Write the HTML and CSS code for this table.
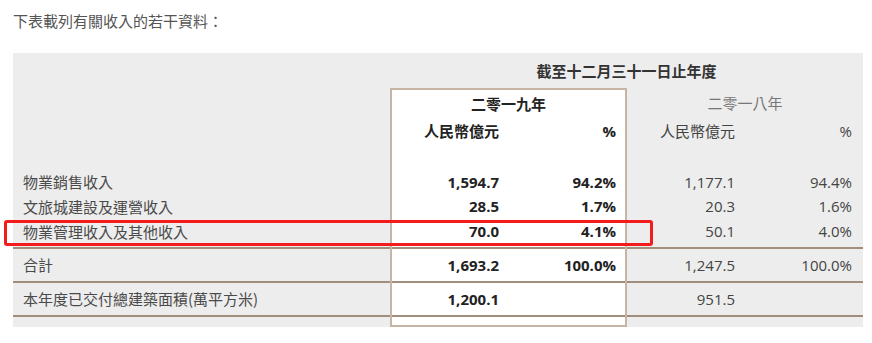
FILE: index.html
```html
<!DOCTYPE html>
<html lang="zh-Hant">
<head>
<meta charset="utf-8">
<title>收入資料</title>
<link rel="stylesheet" href="styles.css">
</head>
<body>
<div class="page">
  <p class="intro">下表載列有關收入的若干資料：</p>
  <div class="panel">
    <div class="head-empty"></div>
    <div class="period">截至十二月三十一日止年度</div>

    <div class="col labels">
      <div class="row r-year"></div>
      <div class="row r-unit"></div>
      <div class="row r-gap"></div>
      <div class="row r-d1"><span class="lbl">物業銷售收入</span></div>
      <div class="row r-d2"><span class="lbl">文旅城建設及運營收入</span></div>
      <div class="row r-d3 line"><span class="lbl">物業管理收入及其他收入</span></div>
      <div class="row r-tot line"><span class="lbl">合計</span></div>
      <div class="row r-gfa line"><span class="lbl">本年度已交付總建築面積(萬平方米)</span></div>
      <div class="row r-tail"></div>
    </div>

    <div class="col g19">
      <div class="row r-year year">二零一九年</div>
      <div class="row r-unit pair"><span>人民幣億元</span><span>%</span></div>
      <div class="row r-gap"></div>
      <div class="row r-d1 pair"><span>1,594.7</span><span>94.2%</span></div>
      <div class="row r-d2 pair"><span>28.5</span><span>1.7%</span></div>
      <div class="row r-d3 pair line"><span>70.0</span><span>4.1%</span></div>
      <div class="row r-tot pair line"><span>1,693.2</span><span>100.0%</span></div>
      <div class="row r-gfa pair line"><span>1,200.1</span><span></span></div>
      <div class="row r-tail"></div>
    </div>

    <div class="col g18">
      <div class="row r-year year">二零一八年</div>
      <div class="row r-unit pair"><span>人民幣億元</span><span>%</span></div>
      <div class="row r-gap"></div>
      <div class="row r-d1 pair"><span>1,177.1</span><span>94.4%</span></div>
      <div class="row r-d2 pair"><span>20.3</span><span>1.6%</span></div>
      <div class="row r-d3 pair line"><span>50.1</span><span>4.0%</span></div>
      <div class="row r-tot pair line"><span>1,247.5</span><span>100.0%</span></div>
      <div class="row r-gfa pair line"><span>951.5</span><span></span></div>
      <div class="row r-tail"></div>
    </div>
  </div>
  <div class="highlight"></div>
</div>
</body>
</html>
```

FILE: styles.css
```css
* { box-sizing: border-box; }

html, body {
  margin: 0;
  padding: 0;
  background: #ffffff;
}

body {
  font-family: "Open Sans", "Noto Sans CJK TC", sans-serif;
  font-size: 15px;
  color: #444;
}

.page {
  position: relative;
  width: 872px;
  height: 343px;
  padding: 10px 9px 0 13px;
}

.intro {
  margin: 0;
  height: 21px;
  line-height: 21px;
  font-family: "Noto Sans CJK TC", sans-serif;
  font-size: 15px;
  color: #555;
}

.panel {
  margin-top: 22px;
  width: 850px;
  background: #ededed;
  display: grid;
  grid-template-columns: 377px 237px 236px;
  grid-template-rows: 35px auto;
}

.period {
  grid-column: 2 / 4;
  text-align: center;
  line-height: 35px;
  font-family: "Noto Sans CJK TC", sans-serif;
  font-weight: 700;
  color: #333;
}

.col {
  display: flex;
  flex-direction: column;
}

.row {
  display: flex;
  align-items: flex-start;
  flex: none;
  line-height: 24px;
}

.r-year { height: 30px; line-height: 30px; }
.r-unit { height: 26px; line-height: 26px; }
.r-gap  { height: 26px; }
.r-d1   { height: 24px; }
.r-d2   { height: 25px; line-height: 25px; }
.r-d3   { height: 30px; line-height: 25px; }
.r-tot  { height: 34px; line-height: 32px; }
.r-gfa  { height: 34px; line-height: 32px; }
.r-tail { height: 10px; }

.line { border-bottom: 2px solid #a18d7b; }

.labels .lbl {
  padding-left: 10px;
  font-family: "Noto Sans CJK TC", sans-serif;
  color: #4a4a4a;
}

.g19 {
  background: #ffffff;
  border: 2px solid #c6b5a5;
}

.g19 .r-year { height: 28px; line-height: 28px; }
.g19 .r-tail { height: 8px; }

.year {
  justify-content: center;
  font-family: "Noto Sans CJK TC", sans-serif;
}

.g19 .year { font-weight: 700; color: #222; }
.g18 .year { color: #777; }

.pair > span {
  text-align: right;
}

.g19 .pair > span:first-child { width: 116px; padding-right: 9px; }
.g19 .pair > span:last-child  { width: 117px; padding-right: 9px; }
.g18 .pair > span:first-child { width: 118px; padding-right: 10px; }
.g18 .pair > span:last-child  { width: 118px; padding-right: 11px; }

.g19 .pair { font-weight: 700; color: #222; }
.g18 .pair { color: #444; }

.r-unit > span:first-child {
  font-family: "Noto Sans CJK TC", sans-serif;
}

.highlight {
  position: absolute;
  left: 4px;
  top: 220px;
  width: 649px;
  height: 26px;
  border: 3px solid #f31b1b;
  border-radius: 3px;
}
```
